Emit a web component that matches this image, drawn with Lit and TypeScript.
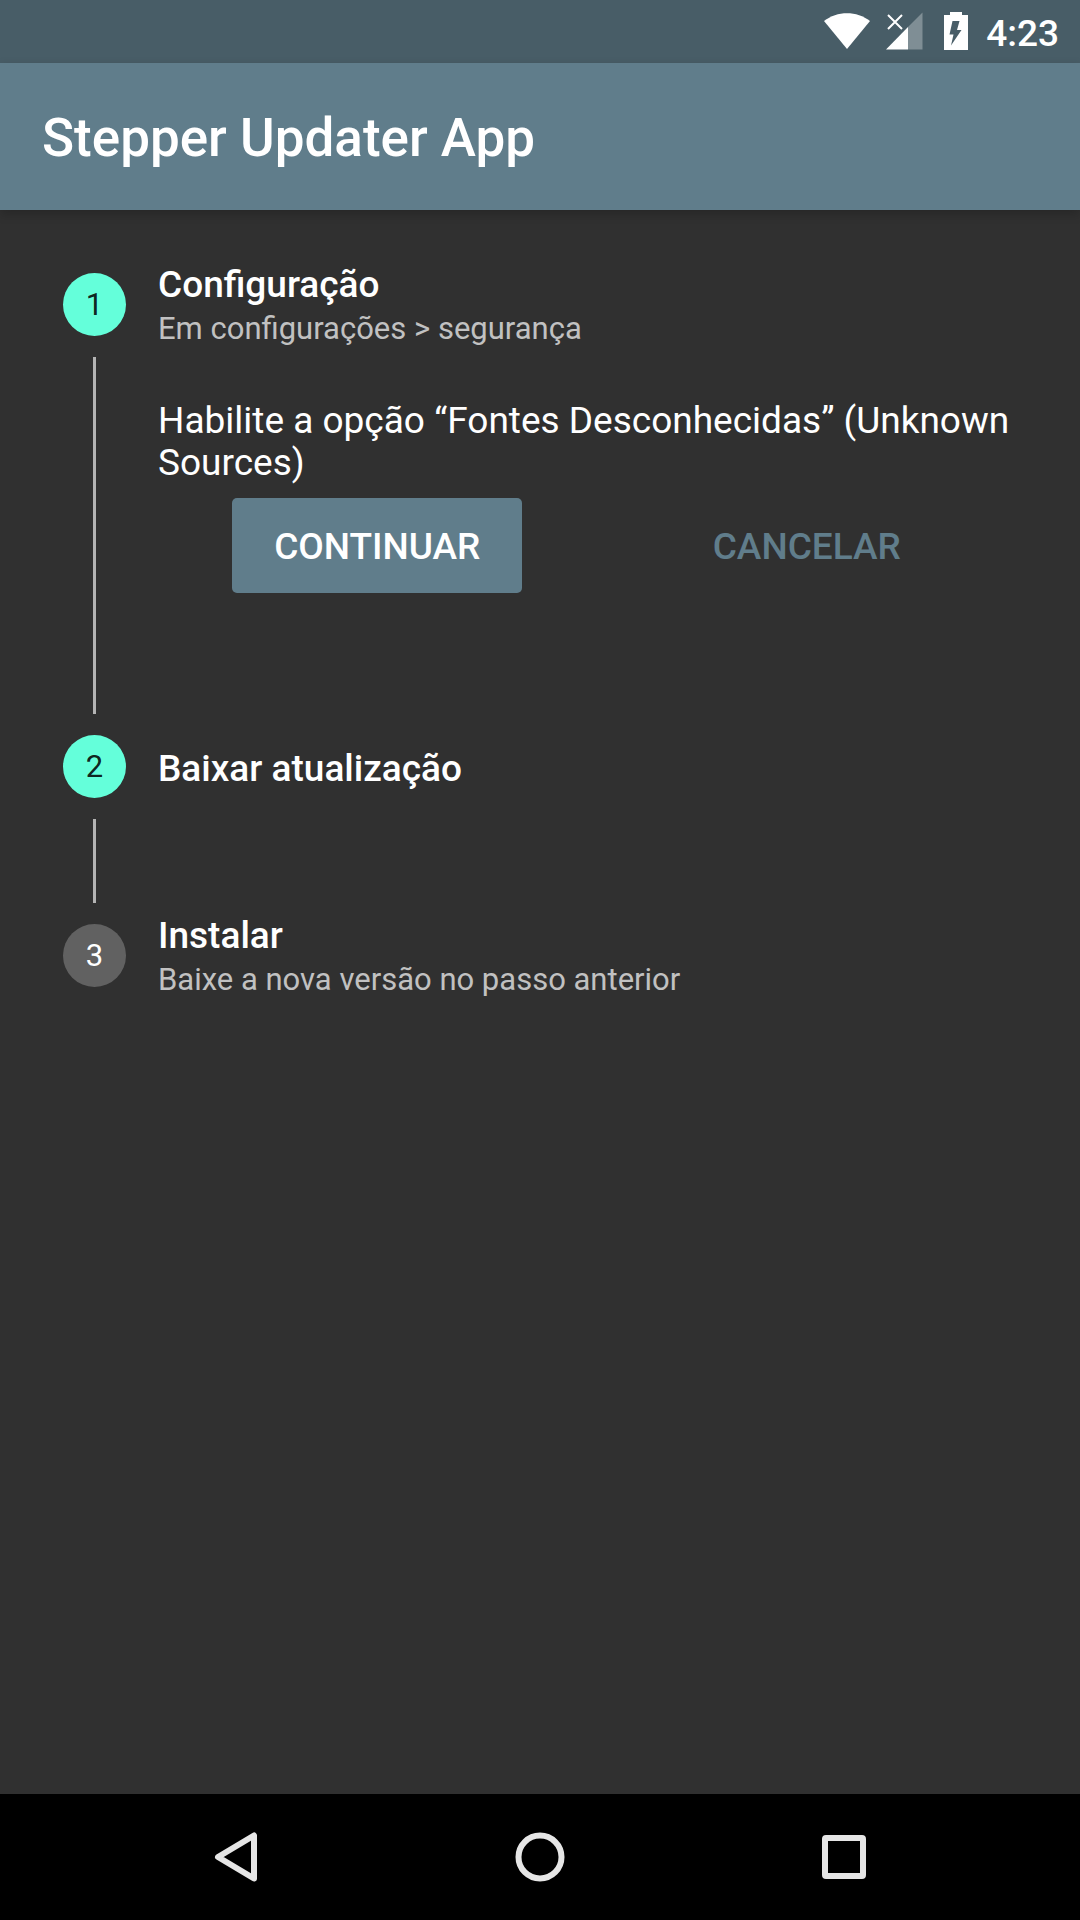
import { LitElement, html, css, nothing } from "lit";
import { customElement, state } from "lit/decorators.js";

interface Step {
  title: string;
  subtitle?: string;
  enabled: boolean;
}

@customElement("app-root")
export class AppRoot extends LitElement {
  static styles = css`
    :host {
      display: flex;
      flex-direction: column;
      min-height: 100vh;
      background: #303030;
      color: #fff;
      font-family: Roboto, "Noto Sans", sans-serif;
      font-size: 37px;
      line-height: 42px;
    }
    * {
      box-sizing: border-box;
    }
    svg {
      display: block;
    }
    h1,
    p,
    ol {
      margin: 0;
      padding: 0;
    }
    button {
      border: 0;
      padding: 0;
      background: none;
      color: inherit;
      font: inherit;
      cursor: pointer;
    }

    .status {
      display: flex;
      justify-content: flex-end;
      align-items: center;
      height: 63px;
      padding-right: 21px;
      background: #485d67;
    }
    .status .signal {
      margin-left: 14px;
    }
    .status .battery {
      margin-left: 21px;
    }
    .status .clock {
      margin-left: 18px;
      padding-top: 4px;
      font-weight: 500;
    }

    .appbar {
      display: flex;
      align-items: center;
      height: 147px;
      padding: 4px 42px 0;
      background: #607d8b;
      box-shadow: 0 4px 10px rgba(0, 0, 0, 0.2);
    }
    .appbar h1 {
      font-size: 53px;
      line-height: 63px;
      font-weight: 500;
    }

    main {
      flex: 1;
      padding: 42px 63px;
    }
    .steps {
      list-style: none;
    }
    .header {
      display: flex;
      align-items: center;
      gap: 32px;
      width: 100%;
      height: 105px;
      text-align: left;
    }
    .badge {
      display: flex;
      align-items: center;
      justify-content: center;
      flex: none;
      width: 63px;
      height: 63px;
      border-radius: 50%;
      background: #64ffda;
      color: rgba(0, 0, 0, 0.87);
      font-size: 31px;
    }
    .badge.off {
      background: #616161;
      color: #fff;
    }
    .labels {
      display: flex;
      flex-direction: column;
      gap: 2px;
      padding-top: 4px;
    }
    .title {
      font-weight: 500;
    }
    .subtitle {
      color: #c1c1c1;
      font-size: 31px;
    }
    .body {
      display: flex;
      gap: 32px;
      min-height: 84px;
    }
    .rail {
      display: flex;
      justify-content: center;
      flex: none;
      width: 63px;
    }
    .rail::before {
      content: "";
      width: 3px;
      background: #b4b4b4;
    }
    .content {
      flex: 1;
      padding: 43px 0 121px;
    }
    .actions {
      display: flex;
      justify-content: space-around;
      padding-top: 14px;
    }
    .action {
      height: 95px;
      padding: 2px 42px 0;
      border-radius: 5px;
      color: #607d8b;
      font-weight: 500;
    }
    .action.raised {
      background: #607d8b;
      color: #fff;
    }

    .nav {
      display: flex;
      height: 126px;
      padding: 0 84px;
      background: #000;
    }
    .nav button {
      flex: 1;
      display: flex;
      align-items: center;
      justify-content: center;
    }
    .nav svg {
      fill: none;
      stroke: #e6e6e6;
      stroke-width: 6;
      stroke-linejoin: round;
    }
  `;

  @state() private current = 0;

  private steps: Step[] = [
    { title: "Configuração", subtitle: "Em configurações > segurança", enabled: true },
    { title: "Baixar atualização", enabled: true },
    { title: "Instalar", subtitle: "Baixe a nova versão no passo anterior", enabled: false },
  ];

  private select(index: number) {
    if (this.steps[index]?.enabled) this.current = index;
  }

  private renderContent() {
    return html`<div class="content">
      <p>Habilite a opção “Fontes Desconhecidas” (Unknown Sources)</p>
      <div class="actions">
        <button class="action raised" @click=${() => this.select(this.current + 1)}>CONTINUAR</button>
        <button class="action" @click=${() => this.select(0)}>CANCELAR</button>
      </div>
    </div>`;
  }

  private renderStep(step: Step, index: number) {
    const last = index === this.steps.length - 1;
    return html`<li>
      <button class="header" @click=${() => this.select(index)}>
        <span class="badge ${step.enabled ? "" : "off"}">${index + 1}</span>
        <span class="labels">
          <span class="title">${step.title}</span>
          ${step.subtitle ? html`<span class="subtitle">${step.subtitle}</span>` : nothing}
        </span>
      </button>
      ${last
        ? nothing
        : html`<div class="body">
            <div class="rail"></div>
            ${index === this.current ? this.renderContent() : nothing}
          </div>`}
    </li>`;
  }

  render() {
    return html`
      <div class="status">
        <svg width="48" height="39" viewBox="0 0 48 39" aria-hidden="true">
          <path fill="#fff" d="M1 9C14-1.500 34-1.500 47 9L24 37Z" />
        </svg>
        <svg class="signal" width="38" height="39" viewBox="0 0 38 39" aria-hidden="true">
          <path fill="#fff" fill-opacity=".3" d="M37.500 .500V37.500H23V15Z" />
          <path fill="#fff" d="M1 37.500L23 15V37.500Z" />
          <path stroke="#fff" stroke-width="2" d="M3 3L17 17M17 3L3 17" />
        </svg>
        <svg class="battery" width="24" height="39" viewBox="0 0 24 39" aria-hidden="true">
          <path
            fill="#fff"
            fill-rule="evenodd"
            d="M6 0H18V3H24V38H0V3H6ZM8.500 9L5.500 22.500H9.500L7 33.500L17.500 18H13L15.500 9Z"
          />
        </svg>
        <span class="clock">4:23</span>
      </div>
      <header class="appbar"><h1>Stepper Updater App</h1></header>
      <main>
        <ol class="steps">
          ${this.steps.map((step, index) => this.renderStep(step, index))}
        </ol>
      </main>
      <nav class="nav">
        <button aria-label="Voltar">
          <svg width="50" height="54" viewBox="0 0 50 54"><path d="M7 27L43 5.500V48.500Z" /></svg>
        </button>
        <button aria-label="Início">
          <svg width="50" height="50" viewBox="0 0 50 50"><circle cx="25" cy="25" r="21.500" /></svg>
        </button>
        <button aria-label="Recentes">
          <svg width="50" height="50" viewBox="0 0 50 50"><rect x="6" y="6" width="38" height="38" rx="1" /></svg>
        </button>
      </nav>
    `;
  }
}
